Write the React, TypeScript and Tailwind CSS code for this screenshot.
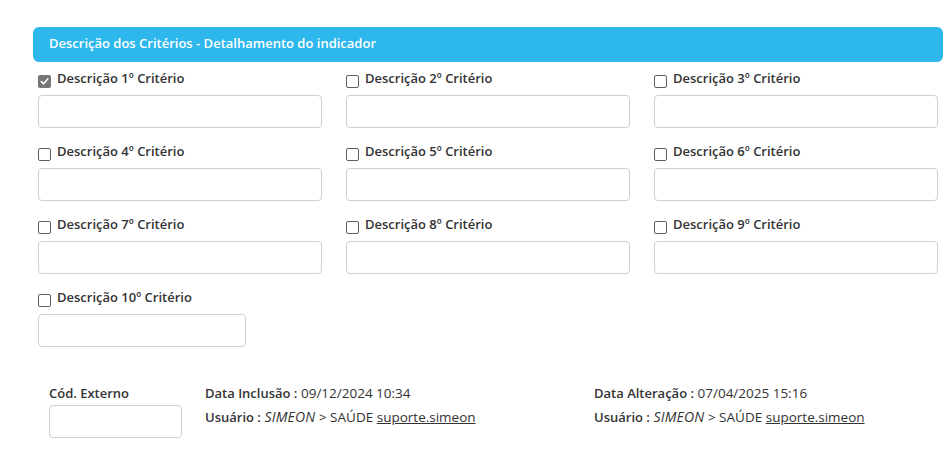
import React from 'react';

const criterios = Array.from({ length: 10 }, (_, i) => ({
  n: i + 1,
  checked: i === 0,
  wide: i < 9,
}));

const CheckBox: React.FC<{ checked?: boolean }> = ({ checked }) =>
  checked ? (
    <span className="mt-[6px] flex h-[13px] w-[13px] shrink-0 items-center justify-center rounded-[2px] bg-[#767676]">
      <svg width="9" height="9" viewBox="0 0 10 10">
        <path d="M1.5 5.2 L4 7.6 L8.6 2.2" fill="none" stroke="#fff" strokeWidth="1.8" strokeLinecap="round" strokeLinejoin="round" />
      </svg>
    </span>
  ) : (
    <span className="mt-[6px] block h-[13px] w-[13px] shrink-0 rounded-[2px] border border-[#5f5f5f] bg-white" />
  );

const Field: React.FC<{ className?: string }> = ({ className }) => (
  <div className={`h-[33px] rounded-[4px] border border-[#cfcfcf] bg-white ${className ?? ''}`} />
);

const Usuario: React.FC = () => (
  <div>
    <span className="text-[13px] font-semibold">Usuário :</span>{' '}
    <i className="text-[14px] tracking-[0.2px]">SIMEON</i> &gt; SAÚDE{' '}
    <span className="underline">suporte.simeon</span>
  </div>
);

export default function App() {
  return (
    <div className="h-[456px] w-[952px] bg-white text-[13px] text-[#333] font-['Open_Sans',sans-serif]">
      <div className="ml-[33px] w-[910px] pt-[27px]">
        {/* cabeçalho */}
        <div className="flex h-[35px] items-center rounded-[6px] bg-[#2db7ed] pb-[1px] pl-[16px] font-semibold text-white">
          Descrição dos Critérios - Detalhamento do indicador
        </div>

        {/* critérios */}
        <div className="grid grid-cols-3 gap-x-[24px] gap-y-[14px] pl-[5px] pr-[5px] pt-[7px]">
          {criterios.map((c) => (
            <div key={c.n}>
              <div className="flex h-[18px] items-start gap-[6px]">
                <CheckBox checked={c.checked} />
                <span className="font-semibold leading-[18px]">Descrição {c.n}º Critério</span>
              </div>
              <Field className={`mt-[8px] ${c.wide ? '' : 'w-[208px]'}`} />
            </div>
          ))}
        </div>

        {/* rodapé */}
        <div className="mt-[37px] flex pl-[16px]">
          <div className="w-[133px]">
            <div className="font-semibold leading-[18px]">Cód. Externo</div>
            <Field className="mt-[3px]" />
          </div>
          <div className="ml-[23px] w-[389px] text-[13.5px] leading-[23px] -mt-[2px]">
            <div>
              <span className="text-[13px] font-semibold">Data Inclusão :</span> 09/12/2024 10:34
            </div>
            <Usuario />
          </div>
          <div className="text-[13.5px] leading-[23px] -mt-[2px]">
            <div>
              <span className="text-[13px] font-semibold">Data Alteração :</span> 07/04/2025 15:16
            </div>
            <Usuario />
          </div>
        </div>
      </div>
    </div>
  );
}
